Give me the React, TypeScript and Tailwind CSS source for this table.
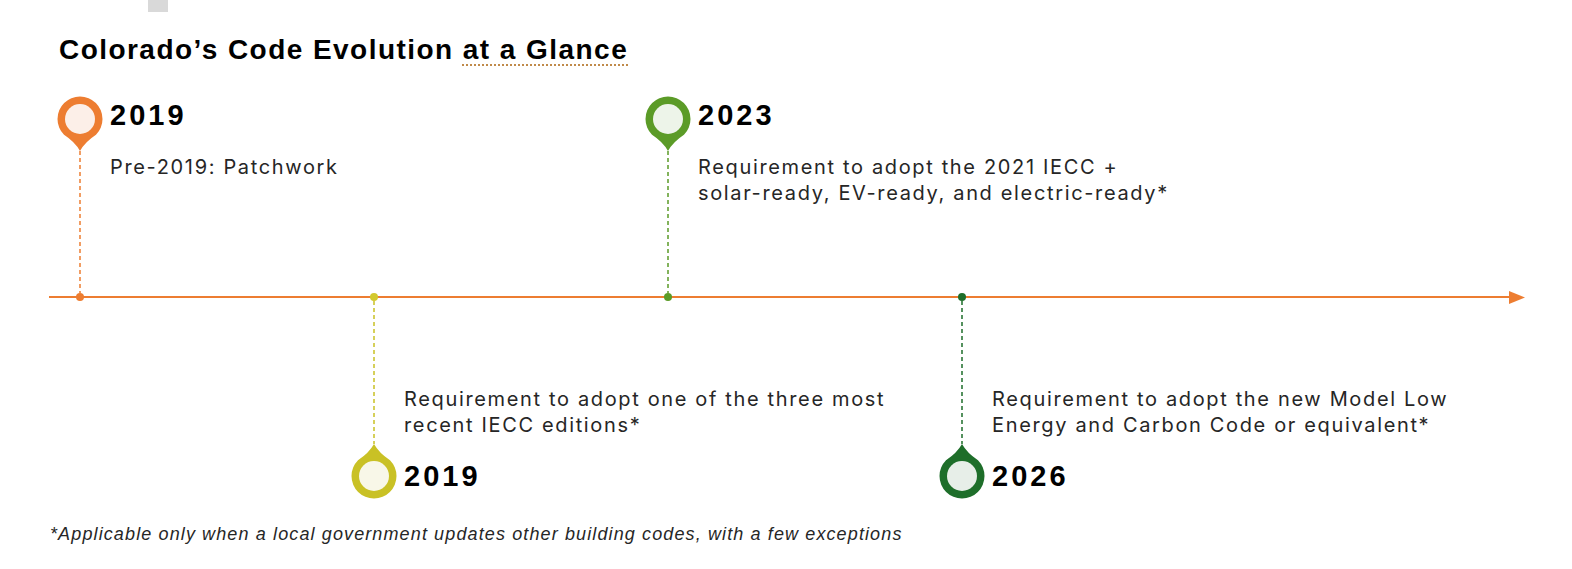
import React from "react";

const Pin = ({ color, fill, flip }: { color: string; fill: string; flip?: boolean }) => (
  <svg width="48" height="56" viewBox="0 0 48 56" className={flip ? "rotate-180 block" : "block"}>
    <path d="M8 39.8 A22.5 22.5 0 1 1 40 39.8 Q29 47 24 56 Q19 47 8 39.8 Z" fill={color} />
    <circle cx="24" cy="24" r="15" fill={fill} />
  </svg>
);

const Dashed = ({ color, h }: { color: string; h: number }) => (
  <svg width="4" height={h} viewBox={`0 0 4 ${h}`} className="block">
    <line x1="2" y1="0" x2="2" y2={h} stroke={color} strokeWidth="1.5" strokeDasharray="4 3" />
  </svg>
);

const yearCls =
  "font-['Liberation_Sans',Arial,sans-serif] font-bold text-[29px] leading-[29px] tracking-[3px] text-black";
const descCls =
  "font-['Inter',sans-serif] text-[20px] leading-[26px] tracking-[1.65px] text-[#262626]";

const TopMilestone = ({
  color,
  fill,
  year,
  lines,
}: {
  color: string;
  fill: string;
  year: string;
  lines: string[];
}) => (
  <div className="w-[588px] flex gap-[6px]">
    <div className="w-[48px] flex flex-col items-center">
      <Pin color={color} fill={fill} />
      <Dashed color={color} h={142} />
    </div>
    <div className="flex flex-col">
      <div className={`${yearCls} mt-[6px]`}>{year}</div>
      <div className={`${descCls} mt-[24px]`}>
        {lines.map((l) => (
          <div key={l} className="whitespace-nowrap">{l}</div>
        ))}
      </div>
    </div>
  </div>
);

const BottomMilestone = ({
  color,
  fill,
  year,
  lines,
}: {
  color: string;
  fill: string;
  year: string;
  lines: string[];
}) => (
  <div className="w-[588px] flex gap-[6px]">
    <div className="w-[48px] flex flex-col items-center">
      <Dashed color={color} h={143} />
      <Pin color={color} fill={fill} flip />
    </div>
    <div className="flex flex-col">
      <div className={`${descCls} mt-[85px]`}>
        {lines.map((l) => (
          <div key={l} className="whitespace-nowrap">{l}</div>
        ))}
      </div>
      <div className={`${yearCls} mt-[24px]`}>{year}</div>
    </div>
  </div>
);

export default function App() {
  return (
    <div className="w-[1572px] h-[569px] bg-white overflow-hidden flex flex-col">
      <div className="ml-[148px] w-[20px] h-[12px] bg-[#d9d9d9]" />
      <h1 className="mt-[24px] ml-[59px] font-['Liberation_Sans',Arial,sans-serif] font-bold text-[28px] leading-[28px] tracking-[1.45px] text-black whitespace-nowrap">
        Colorado’s Code Evolution{" "}
        <span className="underline decoration-dotted decoration-[#c08a4a] decoration-[1.5px] underline-offset-[5px]">
          at a Glance
        </span>
      </h1>

      <div className="mt-[31px] flex pl-[56px] h-[198px]">
        <TopMilestone color="#ed7d31" fill="#fcefe8" year="2019" lines={["Pre-2019: Patchwork"]} />
        <TopMilestone
          color="#5b9b27"
          fill="#edf4e9"
          year="2023"
          lines={["Requirement to adopt the 2021 IECC +", "solar-ready, EV-ready, and electric-ready*"]}
        />
      </div>

      <div className="relative ml-[49px] w-[1476px] h-[8px] flex items-center">
        <div className="flex-1 h-[2.5px] bg-[#ed7d31]" />
        <svg width="16" height="13" viewBox="0 0 16 13" className="block -ml-[1px]">
          <polygon points="0,0 16,6.5 0,13" fill="#ed7d31" />
        </svg>
        <div className="absolute top-0 left-[27px] w-[8px] h-[8px] rounded-full bg-[#ed7d31]" />
        <div className="absolute top-0 left-[321px] w-[8px] h-[8px] rounded-full bg-[#d3c92d]" />
        <div className="absolute top-0 left-[615px] w-[8px] h-[8px] rounded-full bg-[#5b9b27]" />
        <div className="absolute top-0 left-[909px] w-[8px] h-[8px] rounded-full bg-[#1e6e2a]" />
      </div>

      <div className="flex pl-[350px] h-[199px]">
        <BottomMilestone
          color="#c9c125"
          fill="#f8f7e8"
          year="2019"
          lines={["Requirement to adopt one of the three most", "recent IECC editions*"]}
        />
        <BottomMilestone
          color="#1e6e2a"
          fill="#e7eee8"
          year="2026"
          lines={["Requirement to adopt the new Model Low", "Energy and Carbon Code or equivalent*"]}
        />
      </div>

      <p className="mt-[25px] ml-[50px] font-['Liberation_Sans',Arial,sans-serif] italic text-[18px] leading-[18px] tracking-[1.12px] text-[#262626] whitespace-nowrap">
        *Applicable only when a local government updates other building codes, with a few exceptions
      </p>
    </div>
  );
}
